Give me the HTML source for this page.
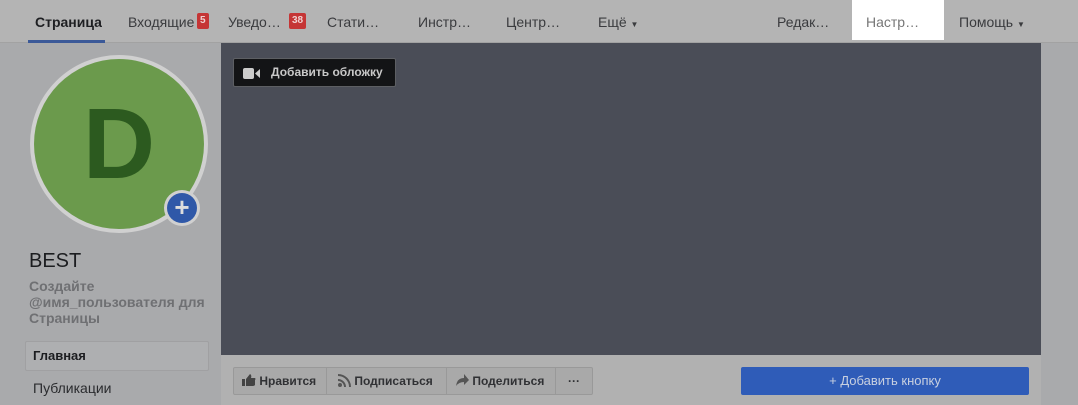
<!DOCTYPE html>
<html><head><meta charset="utf-8"><style>
*{margin:0;padding:0;box-sizing:border-box}
body{width:1078px;height:405px;overflow:hidden;background:#a9aaac;font-family:"Liberation Sans",Arial,sans-serif;position:relative}
.nav{position:absolute;left:0;top:0;width:1078px;height:43px;background:#b4b4b4;border-bottom:1px solid #a2a2a2}
.nav span{position:absolute;top:14px;font-size:14px;color:#3a3b3e;white-space:nowrap;line-height:16px}
.nav .badge{position:absolute;top:13px;background:#c53535;color:#f0d0d0;font-size:10px;height:16px;line-height:16px;padding:0 3px;border-radius:2px;font-weight:bold}
.cover{position:absolute;left:221px;top:43px;width:820px;height:312px;background:#4a4d57}
.addcov{position:absolute;left:233px;top:58px;width:163px;height:29px;background:#131416;border:1px solid #5d5f63;border-radius:2px;color:#c8c8c8;font-size:12px;font-weight:bold;line-height:27px;padding-left:37px}
.av{position:absolute;left:30px;top:55px;width:178px;height:178px;border-radius:50%;background:#d0d0d0;}
.av div{position:absolute;left:4px;top:4px;width:170px;height:170px;border-radius:50%;background:#6b9a4c;color:#2c5a1f;font-size:100px;font-weight:bold;text-align:center;line-height:170px}
.plus{position:absolute;left:164px;top:190px;width:36px;height:36px;border-radius:50%;background:#d0d0d0}
.plus div{position:absolute;left:3px;top:3px;width:30px;height:30px;border-radius:50%;background:#2f58a8;color:#ddd;font-size:26px;font-weight:bold;text-align:center;line-height:29px}
.bar{position:absolute;left:221px;top:355px;width:820px;height:50px;background:#b1b1b1}
.btns{position:absolute;left:233px;top:367px;height:28px;display:flex;border:1px solid #999;border-radius:2px;background:#a9a9a9}
.btns div{border-right:1px solid #999;font-size:12px;font-weight:bold;color:#303134;line-height:26px;padding:0 10px 0 10px;white-space:nowrap}
.btns div:last-child{border-right:none}
.blue{position:absolute;left:741px;top:367px;width:288px;height:28px;background:#2f5cb8;border-radius:2px;color:#c8d0e0;font-size:13px;text-align:center;line-height:28px}
</style></head><body>
<div class="nav">
<span style="left:35px;font-weight:bold;color:#1e1f22">Страница</span>
<div style="position:absolute;left:28px;top:40px;width:77px;height:3px;background:#3b5998"></div>
<span style="left:128px">Входящие</span><span class="badge" style="left:197px">5</span>
<span style="left:228px">Уведо…</span><span class="badge" style="left:289px">38</span>
<span style="left:327px">Стати…</span>
<span style="left:418px">Инстр…</span>
<span style="left:506px">Центр…</span>
<span style="left:598px">Ещё <small style="font-size:8px">▼</small></span>
<span style="left:777px">Редак…</span>
<div style="position:absolute;left:852px;top:0;width:92px;height:40px;background:#fff"></div>
<span style="left:866px;color:#777">Настр…</span>
<span style="left:959px">Помощь <small style="font-size:8px">▼</small></span>
</div>
<div class="cover"></div>
<div class="addcov"><svg style="position:absolute;left:9px;top:9px" width="18" height="11"><rect x="0" y="0" width="11" height="11" rx="2" fill="#ccc"/><path d="M12 5.5L17 1V10Z" fill="#ccc"/></svg>Добавить обложку</div>
<div class="av"><div>D</div></div>
<div class="plus"><div>+</div></div>
<div style="position:absolute;left:29px;top:250px;font-size:20px;color:#1c1d20">BEST</div>
<div style="position:absolute;left:29px;top:278px;font-size:14px;font-weight:bold;color:#6f7073;line-height:16px;width:190px">Создайте @имя_пользователя для Страницы</div>
<div style="position:absolute;left:25px;top:341px;width:184px;height:30px;background:#aeafb1;border:1px solid #a0a0a2;border-radius:2px;font-size:13px;font-weight:bold;color:#1c1d20;line-height:28px;padding-left:7px">Главная</div>
<div style="position:absolute;left:33px;top:380px;font-size:14px;color:#2a2b2e">Публикации</div>
<div class="bar"></div>
<div class="btns">
<div style="width:93px;padding-left:8px"><svg width="14" height="12" style="vertical-align:-1px"><rect x="0" y="5" width="3" height="7" fill="#444"/><path d="M4 5L8 0Q10 1 9 4H13Q14 5 13 6V11Q12 12 11 12H4Z" fill="#444"/></svg> Нравится</div>
<div style="width:120px;padding-left:11px"><svg width="13" height="13" style="vertical-align:-2px"><circle cx="2" cy="11" r="2" fill="#555"/><path d="M0 6A7 7 0 0 1 7 13M0 1A12 12 0 0 1 12 13" stroke="#555" stroke-width="2" fill="none"/></svg> Подписаться</div>
<div style="width:109px;padding-left:9px"><svg width="13" height="12" style="vertical-align:-1px"><path d="M0 12Q1 4 8 4V0L13 6L8 11V8Q3 8 0 12Z" fill="#555"/></svg> Поделиться</div>
<div style="width:36px;text-align:center;padding:0">···</div>
</div>
<div class="blue">+ Добавить кнопку</div>
</body></html>
